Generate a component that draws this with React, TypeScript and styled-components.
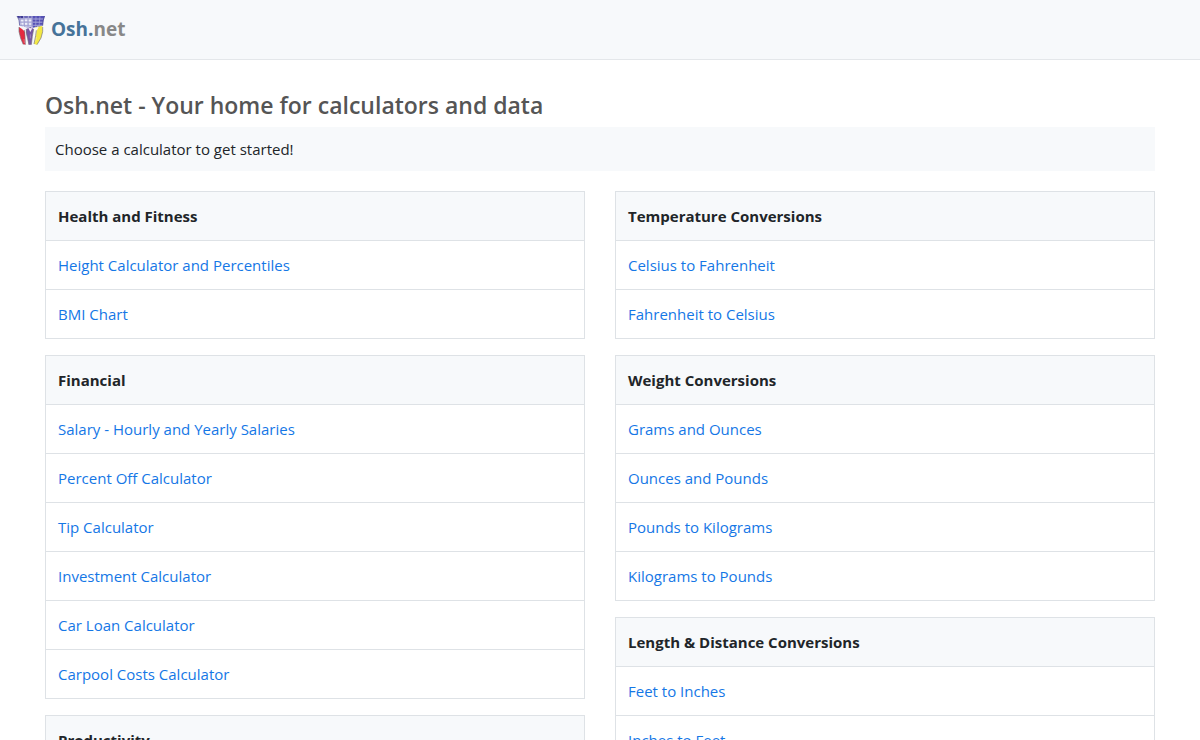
import React from "react";
import styled, { createGlobalStyle } from "styled-components";

const GlobalStyle = createGlobalStyle`
  *, *::before, *::after { box-sizing: border-box; }
  html { scrollbar-width: none; }
  body {
    margin: 0;
    background: #fff;
    color: #212529;
    font: 400 15px/24px "Open Sans", "Noto Sans", sans-serif;
  }
`;

const Header = styled.header`
  display: flex;
  align-items: center;
  min-height: 60px;
  padding: 8px 16px;
  background: #f7f9fb;
  border-bottom: 1px solid #e4e7ea;
`;

const Brand = styled.a`
  display: flex;
  align-items: center;
  gap: 5px;
  color: #888;
  font-size: 19px;
  font-weight: 700;
  line-height: 28px;
  text-decoration: none;

  strong {
    color: #467399;
    font-weight: 700;
  }
`;

const BrandName = styled.span`
  padding-bottom: 2px;
`;

const Main = styled.main`
  padding: 30px 45px;
`;

const Title = styled.h1`
  margin: 0 0 6px;
  color: #555;
  font-size: 23px;
  font-weight: 600;
  line-height: 31px;
`;

const Notice = styled.p`
  margin: 0 0 20px;
  padding: 10px;
  background: #f7f9fb;
`;

const Columns = styled.div`
  display: grid;
  grid-template-columns: 1fr 1fr;
  gap: 30px;
`;

const Column = styled.div`
  display: flex;
  flex-direction: column;
  gap: 16px;
`;

const LinkTable = styled.table`
  width: 100%;
  border-collapse: collapse;
`;

const HeadCell = styled.th`
  padding: 12px;
  border: 1px solid #dee2e6;
  background: #f7f9fb;
  font-weight: 700;
  text-align: left;
`;

const Cell = styled.td`
  padding: 12px;
  border: 1px solid #dee2e6;
`;

const ItemLink = styled.a`
  color: #1577e6;
  text-decoration: none;

  &:hover { text-decoration: underline; }
`;

type Group = { title: string; links: string[] };

const leftGroups: Group[] = [
  { title: "Health and Fitness", links: ["Height Calculator and Percentiles", "BMI Chart"] },
  {
    title: "Financial",
    links: [
      "Salary - Hourly and Yearly Salaries",
      "Percent Off Calculator",
      "Tip Calculator",
      "Investment Calculator",
      "Car Loan Calculator",
      "Carpool Costs Calculator",
    ],
  },
  { title: "Productivity", links: [] },
];

const rightGroups: Group[] = [
  { title: "Temperature Conversions", links: ["Celsius to Fahrenheit", "Fahrenheit to Celsius"] },
  {
    title: "Weight Conversions",
    links: ["Grams and Ounces", "Ounces and Pounds", "Pounds to Kilograms", "Kilograms to Pounds"],
  },
  { title: "Length & Distance Conversions", links: ["Feet to Inches", "Inches to Feet"] },
];

function Logo() {
  return (
    <svg width="30" height="30" viewBox="0 0 90 90" aria-hidden="true">
      <path d="M3 3H86L82 15L80 31Q72 38 65 34Q54 43 44 35Q31 43 24 34Q16 38 11 30L9 15Z" fill="#c3c5e6" />
      <path d="M49 3H86L82 15L80 31Q72 37 65 34Q57 39 50 37Z" fill="#5551b5" />
      <path d="M3 3H22V10H8Z" fill="#3e3a94" />
      <path d="M24 3H36V9H24ZM38 3H47V9H38Z" fill="#6c69b9" />
      <path d="M13 14H22V20H13ZM26 12H34V19H26ZM38 13H46V20H38ZM27 24H34V30H27ZM39 25H45V31H39ZM14 24H22V29H14Z" fill="#eeeef9" />
      <path d="M9 12H82M11 21H80M12 31H80M12 4L16 33M24 4L26 36M36 4V37M48 4V37" fill="none" stroke="#9a98cd" strokeWidth="2" />
      <path d="M52 12H82M51 22H80M52 31H79M60 4L59 35M72 4L69 34" fill="none" stroke="#aaa9dc" strokeWidth="2" />
      <path d="M3 3L9 15L11 32M86 3L82 15L80 32" fill="none" stroke="#403c8e" strokeWidth="2" />
      <path d="M9 36L18 42L27 50L27 64L28 89L21 87L14 70L9 50Z" fill="#e52a40" />
      <path d="M12 34L31 38L29 58L24 45Z" fill="#f4f4f7" />
      <path d="M31 42L43 36L53 42L49 64L46 89L38 89L35 71L30 52Z" fill="#7656a5" />
      <path d="M37 39L43 51L49 40Z" fill="#f4eff6" />
      <path d="M57 37L79 33L80 50L75 69L63 89L54 87L59 66L60 50Z" fill="#f3e842" />
      <path d="M54 38L68 36L62 47L60 64L56 52Z" fill="#fafaf2" />
      <path d="M9 36L9 50L14 70L22 89M25 45L27 62L28 89M31 42L31 54L35 71L39 89M53 42L49 64L46 89M61 46L59 62L54 87M80 36L80 50L75 69L63 89" fill="none" stroke="#777178" strokeWidth="2" />
      <path d="M24 72L25 84M62 66L59 80M43 58L43 70" fill="none" stroke="#f1ecf0" strokeWidth="1" />
    </svg>
  );
}

function GroupTable({ title, links }: Group) {
  return (
    <LinkTable>
      <thead>
        <tr><HeadCell scope="col">{title}</HeadCell></tr>
      </thead>
      <tbody>
        {links.map((link) => (
          <tr key={link}>
            <Cell><ItemLink href="#">{link}</ItemLink></Cell>
          </tr>
        ))}
      </tbody>
    </LinkTable>
  );
}

export default function App() {
  return (
    <>
      <GlobalStyle />
      <Header>
        <Brand href="#">
          <Logo />
          <BrandName><strong>Osh.</strong>net</BrandName>
        </Brand>
      </Header>
      <Main>
        <Title>Osh.net - Your home for calculators and data</Title>
        <Notice>Choose a calculator to get started!</Notice>
        <Columns>
          <Column>{leftGroups.map((g) => <GroupTable key={g.title} {...g} />)}</Column>
          <Column>{rightGroups.map((g) => <GroupTable key={g.title} {...g} />)}</Column>
        </Columns>
      </Main>
    </>
  );
}
